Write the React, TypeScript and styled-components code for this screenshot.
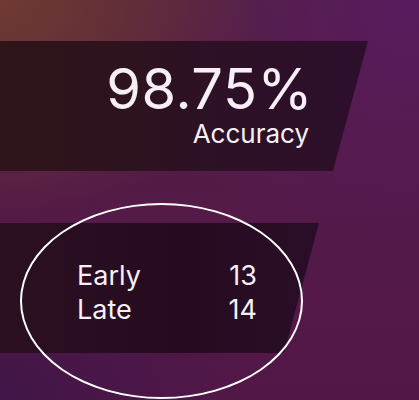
import React from "react";
import styled, { createGlobalStyle } from "styled-components";

const GlobalStyle = createGlobalStyle`
  html, body {
    margin: 0;
    padding: 0;
    width: 419px;
    height: 400px;
    overflow: hidden;
  }
  body {
    font-family: "Inter", "DejaVu Sans", sans-serif;
    color: #f6f0f6;
  }
`;

const Screen = styled.div`
  position: relative;
  width: 419px;
  height: 400px;
  display: flex;
  flex-direction: column;
  gap: 52px;
  padding-top: 41px;
  box-sizing: border-box;
  background:
    radial-gradient(ellipse 260px 220px at 0% 0%, rgba(112, 60, 48, 0.95), rgba(112, 60, 48, 0) 100%),
    radial-gradient(ellipse 300px 260px at 100% 0%, rgba(88, 26, 98, 0.9), rgba(88, 26, 98, 0) 100%),
    radial-gradient(ellipse 240px 160px at 0% 100%, rgba(60, 22, 72, 0.8), rgba(60, 22, 72, 0) 100%),
    linear-gradient(180deg, #55213f 0%, #541a48 50%, #521747 100%);
`;

const Panel = styled.div<{ $width: number }>`
  width: ${(p) => p.$width}px;
  height: 130px;
  box-sizing: border-box;
  clip-path: polygon(0 0, 100% 0, calc(100% - 35px) 100%, 0 100%);
  background: linear-gradient(90deg, #2f1519 0%, #2d1124 55%, #2d0f2c 100%);
`;

const AccuracyPanel = styled(Panel)`
  display: flex;
  flex-direction: column;
  align-items: flex-end;
  padding: 20px 59px 0 0;
`;

const Percent = styled.div`
  font-size: 56px;
  font-weight: 400;
  line-height: 56px;
  letter-spacing: 0.5px;
  margin-right: -4px;
`;

const Caption = styled.div`
  font-size: 26px;
  font-weight: 400;
  line-height: 30px;
  margin-top: 2px;
`;

const StatsWrap = styled.div`
  position: relative;
`;

const StatsPanel = styled(Panel)`
  background: linear-gradient(90deg, #2a1020 0%, #260b20 60%, #2a0e28 100%);
  padding: 36px 0 0 77px;
`;

const StatGrid = styled.div`
  display: grid;
  grid-template-columns: 100px 80px;
`;

const StatLabel = styled.span`
  font-size: 27px;
  font-weight: 400;
  line-height: 34px;
`;

const StatValue = styled(StatLabel)`
  text-align: right;
`;

const Ring = styled.div`
  position: absolute;
  left: 20px;
  top: -20px;
  width: 283px;
  height: 196px;
  box-sizing: border-box;
  border: 2.5px solid #ffffff;
  border-radius: 50%;
  pointer-events: none;
`;

const stats = [
  { label: "Early", value: 13 },
  { label: "Late", value: 14 },
];

export default function App() {
  return (
    <>
      <GlobalStyle />
      <Screen>
        <AccuracyPanel $width={368}>
          <Percent>98.75%</Percent>
          <Caption>Accuracy</Caption>
        </AccuracyPanel>
        <StatsWrap>
          <StatsPanel $width={319}>
            <StatGrid>
              {stats.map((s) => (
                <React.Fragment key={s.label}>
                  <StatLabel>{s.label}</StatLabel>
                  <StatValue>{s.value}</StatValue>
                </React.Fragment>
              ))}
            </StatGrid>
          </StatsPanel>
          <Ring />
        </StatsWrap>
      </Screen>
    </>
  );
}
